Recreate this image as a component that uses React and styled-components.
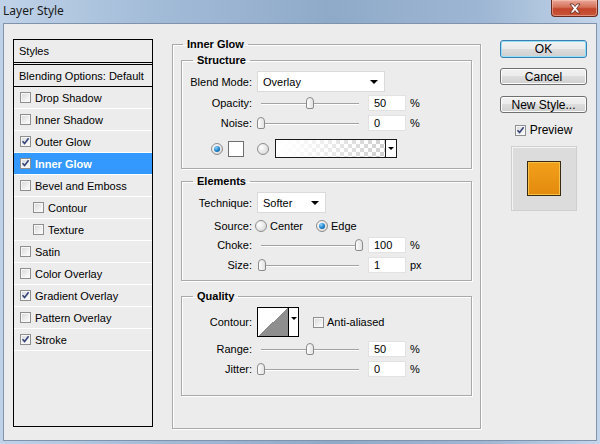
import React from 'react';
import styled, { createGlobalStyle } from 'styled-components';

const GlobalStyle = createGlobalStyle`
  html, body {
    margin: 0;
    padding: 0;
    width: 600px;
    height: 444px;
    overflow: hidden;
  }
`;

const Window = styled.div`
  width: 600px;
  height: 444px;
  display: flex;
  flex-direction: column;
  box-sizing: border-box;
  background: linear-gradient(to right, #bfd2e8 0%, #a3bcd8 25%, #8faac9 55%, #9db6d3 80%, #c3d5ea 100%);
  font-family: "Liberation Sans", Arial, sans-serif;
  font-size: 11px;
  color: #000;
`;

const TitleBar = styled.div`
  height: 23px;
  display: flex;
  justify-content: space-between;
  align-items: flex-start;
  padding-left: 3px;
`;

const Title = styled.div`
  font-family: "Noto Sans", "Open Sans", sans-serif;
  font-size: 12px;
  line-height: 22px;
  color: #1a1a1a;
`;

const CloseButton = styled.div`
  width: 47px;
  height: 17px;
  margin-right: 2px;
  box-sizing: border-box;
  border: 1px solid #6a2a20;
  border-top: none;
  border-radius: 0 0 4px 4px;
  background: linear-gradient(#e9a899 0%, #d47058 45%, #c2452a 55%, #c8563a 100%);
  box-shadow: inset 0 0 0 1px rgba(255, 210, 200, 0.45);
  display: flex;
  align-items: center;
  justify-content: center;
`;

const Client = styled.div`
  flex: 1;
  margin: 0 3px 3px;
  border: 1px solid #7f93ad;
  background: #ececec;
  display: flex;
  align-items: flex-start;
  padding: 13px 0 0 9px;
`;

const StylesPanel = styled.div`
  width: 140px;
  height: 388px;
  margin-top: 2px;
  box-sizing: border-box;
  border: 1px solid #000;
  background: #ececec;
  display: flex;
  flex-direction: column;
`;

const PanelHeader = styled.div`
  height: 22px;
  border-bottom: 1px solid #000;
  display: flex;
  align-items: center;
  padding-left: 5px;
`;

const BlendingRow = styled.div`
  height: 21px;
  margin-top: 1px;
  border-top: 1px solid #000;
  border-bottom: 1px solid #000;
  display: flex;
  align-items: center;
  padding-left: 5px;
`;

const StyleItem = styled.div`
  height: 21px;
  border-bottom: 1px solid #fff;
  display: flex;
  align-items: center;
  gap: 4px;
  padding-left: ${(p) => (p.$sub ? 19 : 6)}px;
  background: ${(p) => (p.$active ? '#3399ff' : 'transparent')};
  color: ${(p) => (p.$active ? '#fff' : '#000')};
  font-weight: ${(p) => (p.$active ? 'bold' : 'normal')};
`;

const CheckBox = styled.span`
  width: 11px;
  height: 11px;
  box-sizing: border-box;
  border: 1px solid #8e8f8f;
  background: linear-gradient(135deg, #d6d6d6 0%, #f4f4f4 70%, #ffffff 100%);
  box-shadow: inset 0 0 0 1px #f7f7f7;
  display: inline-flex;
  align-items: center;
  justify-content: center;
  flex: none;
`;

const Main = styled.fieldset`
  margin: 0 0 0 19px;
  padding: 2px 0 0;
  width: 309px;
  height: 392px;
  box-sizing: border-box;
  border: 1px solid #a9a9a9;
  box-shadow: inset 1px 1px 0 #fff, 1px 1px 0 #fff;
  min-width: 0;
`;

const Legend = styled.legend`
  font-weight: bold;
  line-height: 14px;
  padding: 0 4px;
  margin-left: ${(p) => p.$indent || 10}px;
`;

const Group = styled.fieldset`
  margin: ${(p) => p.$top || 0}px 8px 0;
  padding: 4px 0 ${(p) => p.$bottom || 0}px;
  border: 1px solid #a9a9a9;
  box-shadow: inset 1px 1px 0 #fff, 1px 1px 0 #fff;
  min-width: 0;
`;

const Row = styled.div`
  display: flex;
  align-items: center;
  height: ${(p) => p.$h || 20}px;
  margin-top: ${(p) => p.$mt || 0}px;
  padding-left: ${(p) => p.$pl || 0}px;
`;

const Label = styled.span`
  width: 70px;
  text-align: right;
  margin-right: ${(p) => p.$gap ?? 5}px;
  flex: none;
`;

const Select = styled.div`
  width: ${(p) => p.$w}px;
  height: 21px;
  box-sizing: border-box;
  border: 1px solid #dadada;
  background: #fff;
  display: flex;
  align-items: center;
  justify-content: space-between;
  padding: 0 6px 0 5px;
`;

const Arrow = styled.span`
  width: 0;
  height: 0;
  border-left: 4px solid transparent;
  border-right: 4px solid transparent;
  border-top: 4px solid #000;
`;

const SliderBox = styled.div`
  position: relative;
  width: 106px;
  height: 16px;
  flex: none;
`;

const Track = styled.div`
  position: absolute;
  left: 4px;
  right: 4px;
  top: 8px;
  height: 1px;
  background: #a3a3a3;
  box-shadow: 0 1px 0 #fff;
`;

const Thumb = styled.div`
  position: absolute;
  top: 2px;
  width: 8px;
  height: 12px;
  box-sizing: border-box;
  border: 1px solid #8b8b8b;
  border-radius: 4px 4px 2px 2px;
  background: linear-gradient(to right, #fdfdfd, #e2e2e2);
`;

const NumInput = styled.div`
  width: 38px;
  height: 16px;
  margin-left: 5px;
  box-sizing: border-box;
  border: 1px solid #e2e2e2;
  background: #fff;
  padding-left: 5px;
  display: flex;
  align-items: center;
`;

const Unit = styled.span`
  margin-left: 4px;
`;

const Radio = styled.span`
  width: 12px;
  height: 12px;
  box-sizing: border-box;
  border-radius: 50%;
  border: 1px solid #8d8d8d;
  background: radial-gradient(circle at 35% 35%, #ffffff, #d0d0d0);
  display: inline-flex;
  align-items: center;
  justify-content: center;
  flex: none;
  &::after {
    content: '';
    display: ${(p) => (p.$on ? 'block' : 'none')};
    width: 6px;
    height: 6px;
    border-radius: 50%;
    background: radial-gradient(circle at 35% 30%, #8fd3ff, #1a7fc8 55%, #0b4f86);
  }
`;

const Swatch = styled.span`
  width: 16px;
  height: 16px;
  box-sizing: border-box;
  border: 1px solid #6f6f6f;
  background: #fff;
  margin: 0 13px 0 5px;
`;

const GradientPicker = styled.div`
  width: 122px;
  height: 19px;
  margin-left: 6px;
  box-sizing: border-box;
  border: 1px solid #1a1a1a;
  display: flex;
`;

const GradientFill = styled.div`
  flex: 1;
  background:
    linear-gradient(to right, #fff 0%, rgba(255, 255, 255, 0.9) 20%, rgba(255, 255, 255, 0) 100%),
    repeating-conic-gradient(#cfcfcf 0% 25%, #fff 0% 50%) 0 0 / 8px 8px;
`;

const PickerArrow = styled.div`
  width: 10px;
  border-left: 1px solid #1a1a1a;
  background: #fff;
  display: flex;
  align-items: center;
  justify-content: center;
`;

const SmallArrow = styled.span`
  width: 0;
  height: 0;
  border-left: 3px solid transparent;
  border-right: 3px solid transparent;
  border-top: 3px solid #000;
`;

const Option = styled.span`
  display: inline-flex;
  align-items: center;
  gap: 3px;
  width: ${(p) => p.$w || 'auto'};
`;

const ContourPicker = styled.div`
  width: 42px;
  height: 30px;
  box-sizing: border-box;
  border: 1px solid #000;
  display: flex;
  margin-right: 14px;
`;

const ContourPreview = styled.div`
  flex: 1;
  background: linear-gradient(to top left, #8e8e8e 50%, #fff 50%);
`;

const ContourArrow = styled.div`
  width: 9px;
  border-left: 1px solid #000;
  background: #fff;
  display: flex;
  align-items: flex-start;
  justify-content: center;
  padding-top: 9px;
`;

const SideColumn = styled.div`
  margin: 3px 0 0 19px;
  width: 87px;
  display: flex;
  flex-direction: column;
  align-items: center;
`;

const Button = styled.div`
  width: 87px;
  height: ${(p) => (p.$primary ? 18 : 17)}px;
  margin-bottom: ${(p) => (p.$primary ? 10 : 11)}px;
  box-sizing: border-box;
  border: 1px solid ${(p) => (p.$primary ? '#3c7fb1' : '#707070')};
  border-radius: 3px;
  background: linear-gradient(#f2f2f2 0%, #ebebeb 49%, #dddddd 50%, #cfcfcf 100%);
  box-shadow: inset 0 0 0 1px ${(p) => (p.$primary ? '#8fe0f8' : '#fcfcfc')};
  font-size: 12px;
  display: flex;
  align-items: center;
  justify-content: center;
`;

const PreviewToggle = styled.div`
  display: flex;
  align-items: center;
  gap: 4px;
  font-size: 12px;
  margin-top: -1px;
`;

const PreviewBox = styled.div`
  width: 66px;
  height: 65px;
  margin-top: 9px;
  box-sizing: border-box;
  background: #dcdcdc;
  border: 1px solid #cfcfcf;
  box-shadow: inset 1px 1px 0 #f4f4f4;
  display: flex;
  align-items: center;
  justify-content: center;
`;

const Swatchlet = styled.div`
  width: 34px;
  height: 35px;
  box-sizing: border-box;
  border: 1px solid #3a2a10;
  background: linear-gradient(#f2a01c, #e38a0c);
  box-shadow: inset 0 0 0 1px #f7c24a;
`;

const Tick = () => (
  <svg width="9" height="9" viewBox="0 0 9 9">
    <path d="M1.5 4.2 L3.6 6.6 L7.6 1.2" fill="none" stroke="#36457a" strokeWidth="1.6" />
  </svg>
);

const Check = ({ on }) => <CheckBox>{on && <Tick />}</CheckBox>;

const CloseGlyph = () => (
  <svg width="14" height="11" viewBox="0 0 14 11">
    <path
      d="M2 1 L5 1 L7 3.5 L9 1 L12 1 L8.6 5.5 L12 10 L9 10 L7 7.5 L5 10 L2 10 L5.4 5.5 Z"
      fill="#fff"
      stroke="#5a2218"
      strokeWidth="0.8"
    />
  </svg>
);

const Slider = ({ value }) => (
  <SliderBox>
    <Track />
    <Thumb style={{ left: value * 0.98 }} />
  </SliderBox>
);

const SliderRow = ({ label, value, unit = '%', mt }) => (
  <Row $mt={mt}>
    <Label>{label}</Label>
    <Slider value={value} />
    <NumInput>{value}</NumInput>
    <Unit>{unit}</Unit>
  </Row>
);

const styleItems = [
  { name: 'Drop Shadow' },
  { name: 'Inner Shadow' },
  { name: 'Outer Glow', on: true },
  { name: 'Inner Glow', on: true, active: true },
  { name: 'Bevel and Emboss' },
  { name: 'Contour', sub: true },
  { name: 'Texture', sub: true },
  { name: 'Satin' },
  { name: 'Color Overlay' },
  { name: 'Gradient Overlay', on: true },
  { name: 'Pattern Overlay' },
  { name: 'Stroke', on: true },
];

export default function App() {
  return (
    <Window>
      <GlobalStyle />
      <TitleBar>
        <Title>Layer Style</Title>
        <CloseButton>
          <CloseGlyph />
        </CloseButton>
      </TitleBar>
      <Client>
        <StylesPanel>
          <PanelHeader>Styles</PanelHeader>
          <BlendingRow>Blending Options: Default</BlendingRow>
          {styleItems.map((item) => (
            <StyleItem key={item.name} $sub={item.sub} $active={item.active}>
              <Check on={item.on} />
              {item.name}
            </StyleItem>
          ))}
        </StylesPanel>

        <Main>
          <Legend $indent={10}>Inner Glow</Legend>
          <Group $bottom={10}>
            <Legend $indent={11}>Structure</Legend>
            <Row $h={21}>
              <Label>Blend Mode:</Label>
              <Select $w={128}>
                Overlay
                <Arrow />
              </Select>
            </Row>
            <SliderRow label="Opacity:" value={50} mt={1} />
            <SliderRow label="Noise:" value={0} />
            <Row $h={19} $mt={6} $pl={29}>
              <Radio $on />
              <Swatch />
              <Radio />
              <GradientPicker>
                <GradientFill />
                <PickerArrow>
                  <SmallArrow />
                </PickerArrow>
              </GradientPicker>
            </Row>
          </Group>

          <Group $top={5} $bottom={5}>
            <Legend $indent={11}>Elements</Legend>
            <Row $h={21}>
              <Label>Technique:</Label>
              <Select $w={69}>
                Softer
                <Arrow />
              </Select>
            </Row>
            <Row $h={19} $mt={3}>
              <Label $gap={3}>Source:</Label>
              <Option $w="61px">
                <Radio />
                Center
              </Option>
              <Option>
                <Radio $on />
                Edge
              </Option>
            </Row>
            <SliderRow label="Choke:" value={100} />
            <SliderRow label="Size:" value={1} unit="px" />
          </Group>

          <Group $top={8} $bottom={16}>
            <Legend $indent={11}>Quality</Legend>
            <Row $h={30}>
              <Label>Contour:</Label>
              <ContourPicker>
                <ContourPreview />
                <ContourArrow>
                  <SmallArrow />
                </ContourArrow>
              </ContourPicker>
              <Option>
                <Check />
                Anti-aliased
              </Option>
            </Row>
            <SliderRow label="Range:" value={50} mt={2} />
            <SliderRow label="Jitter:" value={0} />
          </Group>
        </Main>

        <SideColumn>
          <Button $primary>OK</Button>
          <Button>Cancel</Button>
          <Button>New Style...</Button>
          <PreviewToggle>
            <Check on />
            Preview
          </PreviewToggle>
          <PreviewBox>
            <Swatchlet />
          </PreviewBox>
        </SideColumn>
      </Client>
    </Window>
  );
}
